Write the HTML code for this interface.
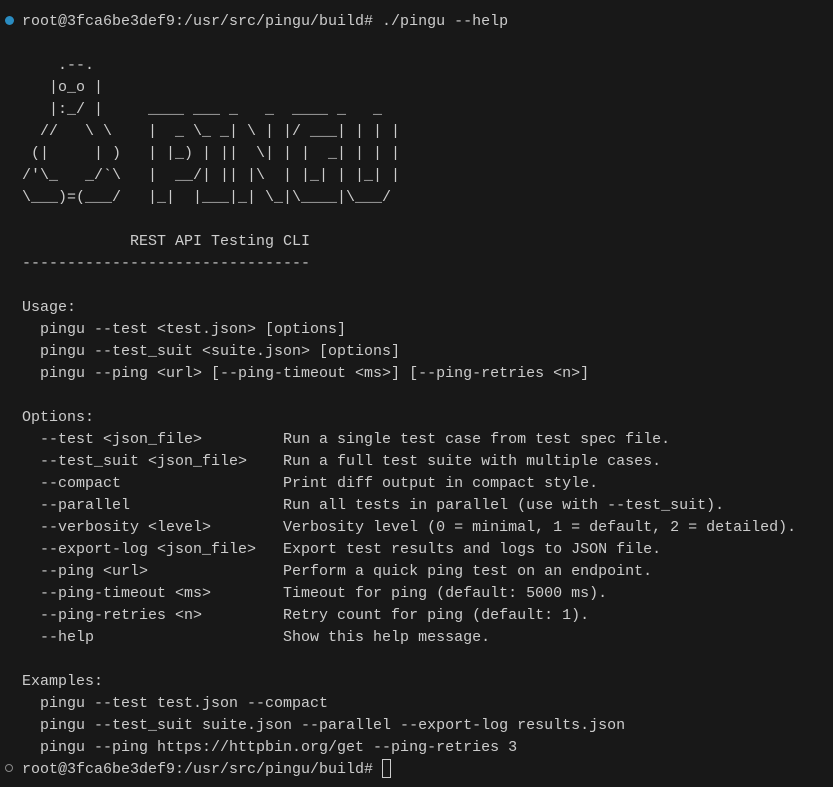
<!DOCTYPE html>
<html><head><meta charset="utf-8"><style>
html,body{margin:0;padding:0;background:#181818;width:833px;height:787px;overflow:hidden}
pre{position:absolute;left:22px;top:11px;margin:0;font-family:"Liberation Mono","DejaVu Sans Mono",monospace;font-size:15px;line-height:22px;color:#cccccc;white-space:pre}
.dot{position:absolute;left:5px;top:16px;width:9px;height:9px;border-radius:50%;background:#2a8cc1}
.dot2{position:absolute;left:5px;top:764px;width:6px;height:6px;border-radius:50%;border:1.5px solid #8a8a8a}
.cur{position:absolute;left:382px;top:759px;width:9px;height:19px;border:1px solid #cccccc;box-sizing:border-box}
</style></head><body>
<div class="dot"></div><div class="dot2"></div><div class="cur"></div>
<pre>root@3fca6be3def9:/usr/src/pingu/build# ./pingu --help

    .--.
   |o_o |
   |:_/ |     ____ ___ _   _  ____ _   _
  //   \ \    |  _ \_ _| \ | |/ ___| | | |
 (|     | )   | |_) | ||  \| | |  _| | | |
/'\_   _/`\   |  __/| || |\  | |_| | |_| |
\___)=(___/   |_|  |___|_| \_|\____|\___/

            REST API Testing CLI
--------------------------------

Usage:
  pingu --test &lt;test.json&gt; [options]
  pingu --test_suit &lt;suite.json&gt; [options]
  pingu --ping &lt;url&gt; [--ping-timeout &lt;ms&gt;] [--ping-retries &lt;n&gt;]

Options:
  --test &lt;json_file&gt;         Run a single test case from test spec file.
  --test_suit &lt;json_file&gt;    Run a full test suite with multiple cases.
  --compact                  Print diff output in compact style.
  --parallel                 Run all tests in parallel (use with --test_suit).
  --verbosity &lt;level&gt;        Verbosity level (0 = minimal, 1 = default, 2 = detailed).
  --export-log &lt;json_file&gt;   Export test results and logs to JSON file.
  --ping &lt;url&gt;               Perform a quick ping test on an endpoint.
  --ping-timeout &lt;ms&gt;        Timeout for ping (default: 5000 ms).
  --ping-retries &lt;n&gt;         Retry count for ping (default: 1).
  --help                     Show this help message.

Examples:
  pingu --test test.json --compact
  pingu --test_suit suite.json --parallel --export-log results.json
  pingu --ping https://httpbin.org/get --ping-retries 3
root@3fca6be3def9:/usr/src/pingu/build# </pre>
</body></html>
